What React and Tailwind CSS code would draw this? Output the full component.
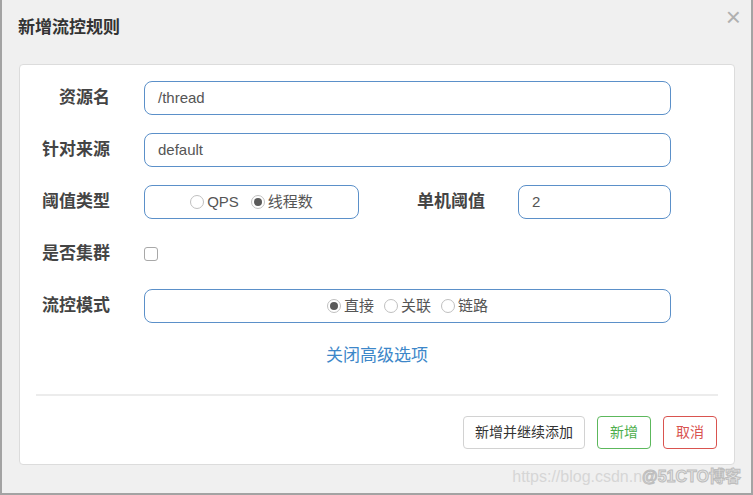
import { useState } from "react";

const font = { fontFamily: '"Liberation Sans", "Noto Sans CJK SC", sans-serif' };

function Radio({ checked, label, onClick }) {
  return (
    <label className="inline-flex items-center gap-[3px] cursor-pointer" onClick={onClick}>
      <span className="w-[14px] h-[14px] rounded-full border border-[#c0c0c0] bg-white flex items-center justify-center">
        {checked && <span className="w-[8px] h-[8px] rounded-full bg-[#5a5a5a]" />}
      </span>
      <span>{label}</span>
    </label>
  );
}

function Row({ label, children }) {
  return (
    <div className="flex items-center h-[34px]">
      <div className="w-[90px] shrink-0 text-right text-[17px] font-bold text-[#444]">{label}</div>
      <div className="ml-[34px] flex-1 flex items-center">{children}</div>
    </div>
  );
}

export default function App() {
  const [grade, setGrade] = useState("thread");
  const [mode, setMode] = useState("direct");
  const [cluster, setCluster] = useState(false);

  return (
    <div style={font} className="relative w-[753px] h-[495px] bg-[#f0f0f0] border-l-2 border-r-2 border-b-2 border-[#a3a3a3] overflow-hidden">
      {/* header */}
      <div className="flex items-center justify-between h-[64px] pl-[16px] pr-[10px] pb-[8px]">
        <h1 className="text-[17px] font-bold text-[#333]">新增流控规则</h1>
        <span className="text-[26px] leading-none text-[#b0b0b0] -mt-[22px]">×</span>
      </div>

      {/* body card */}
      <div className="ml-[17px] mr-[16px] bg-white border border-[#dcdcdc] rounded-[4px] pt-[16px] pb-[15px]">
        <div className="flex flex-col gap-[18px] pr-[63px]">
          <Row label="资源名">
            <div className="w-full h-[34px] rounded-[8px] border-[1.5px] border-[#5b90c9] px-[13px] flex items-center text-[15px] text-[#555]">/thread</div>
          </Row>
          <Row label="针对来源">
            <div className="w-full h-[34px] rounded-[8px] border-[1.5px] border-[#5b90c9] px-[13px] flex items-center text-[15px] text-[#555]">default</div>
          </Row>
          <Row label="阈值类型">
            <div className="w-[215px] h-[34px] rounded-[8px] border-[1.5px] border-[#5b90c9] flex items-center justify-center gap-[12px] text-[15px] text-[#555]">
              <Radio checked={grade === "qps"} label="QPS" onClick={() => setGrade("qps")} />
              <Radio checked={grade === "thread"} label="线程数" onClick={() => setGrade("thread")} />
            </div>
            <div className="w-[126px] text-right text-[17px] font-bold text-[#444]">单机阈值</div>
            <div className="ml-[33px] flex-1 h-[34px] rounded-[8px] border-[1.5px] border-[#5b90c9] px-[13px] flex items-center text-[15px] text-[#555]">2</div>
          </Row>
          <Row label="是否集群">
            <span
              onClick={() => setCluster(!cluster)}
              className="w-[14px] h-[14px] rounded-[3px] border border-[#a8a8a8] bg-white cursor-pointer"
            />
          </Row>
          <Row label="流控模式">
            <div className="w-full h-[34px] rounded-[8px] border-[1.5px] border-[#5b90c9] flex items-center justify-center gap-[10px] text-[15px] text-[#555]">
              <Radio checked={mode === "direct"} label="直接" onClick={() => setMode("direct")} />
              <Radio checked={mode === "relate"} label="关联" onClick={() => setMode("relate")} />
              <Radio checked={mode === "chain"} label="链路" onClick={() => setMode("chain")} />
            </div>
          </Row>
        </div>

        <div className="mt-[20px] text-center text-[17px] text-[#3d87c9]">关闭高级选项</div>

        <div className="mt-[25px] mx-[16px] border-t-2 border-[#ececec]" />

        <div className="mt-[20px] flex justify-end gap-[12px] pr-[17px]">
          <button className="h-[33px] px-[11px] rounded-[4px] border-[1.5px] border-[#d2d2d2] bg-white text-[14px] text-[#333]">新增并继续添加</button>
          <button className="h-[33px] px-[12px] rounded-[4px] border-[1.5px] border-[#5cb85c] bg-white text-[14px] text-[#4cae4c]">新增</button>
          <button className="h-[33px] px-[12px] rounded-[4px] border-[1.5px] border-[#d9534f] bg-white text-[14px] text-[#d9534f]">取消</button>
        </div>
      </div>

      {/* watermark */}
      <div className="absolute right-[10px] bottom-[8px] flex items-center text-[16px] leading-none">
        <span className="text-[#d6d6d6]">https://blog.csdn.n</span>
        <span className="text-[#e6e6e6] font-bold [-webkit-text-stroke:1px_#bdbdbd]">@51CTO博客</span>
      </div>
    </div>
  );
}
